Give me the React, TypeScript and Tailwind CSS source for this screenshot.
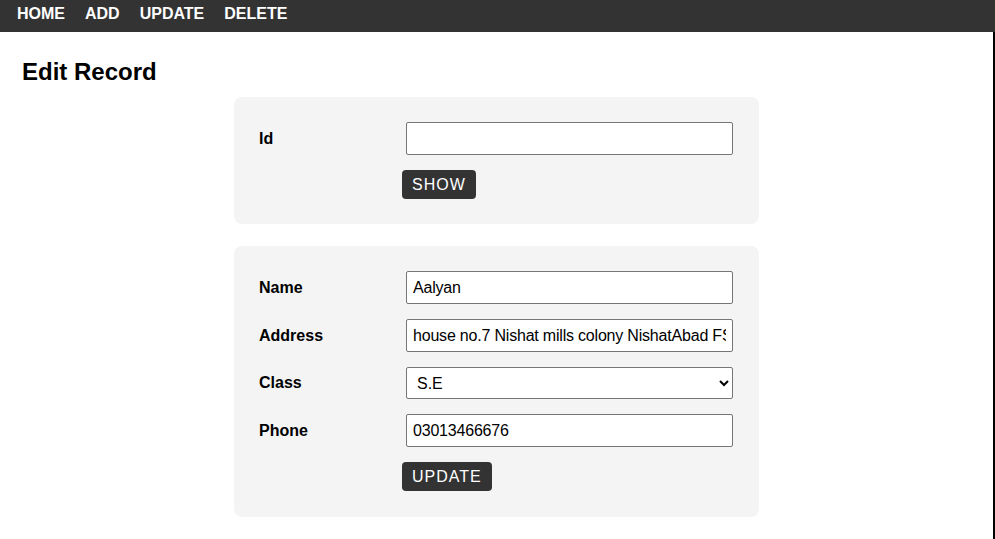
const font = { fontFamily: '"Liberation Sans", Arial, sans-serif' }

const navItems = ["HOME", "ADD", "UPDATE", "DELETE"]

function Row({ label, children }: { label: string; children: React.ReactNode }) {
  return (
    <div className="grid grid-cols-[147px_1fr] items-center">
      <label className="text-[16px] font-bold text-black">{label}</label>
      {children}
    </div>
  )
}

function TextInput({ value }: { value: string }) {
  return (
    <input
      readOnly
      value={value}
      className="h-[33px] w-full rounded-[2px] border border-[#767676] bg-white px-[6px] text-[16px] tracking-[-0.2px] text-black outline-none"
    />
  )
}

function DarkButton({ children }: { children: React.ReactNode }) {
  return (
    <div className="grid grid-cols-[147px_1fr]">
      <div />
      <div>
        <button className="ml-[-4px] h-[29px] rounded-[4px] bg-[#333333] px-[10px] text-[16px] tracking-[1px] text-white">
          {children}
        </button>
      </div>
    </div>
  )
}

export default function App() {
  return (
    <div className="min-h-screen bg-white" style={font}>
      <nav className="flex h-8 gap-[20px] bg-[#333333] pl-[17px] pt-[5px]">
        {navItems.map((item) => (
          <a key={item} className="text-[16px] font-bold leading-[18px] text-white">
            {item}
          </a>
        ))}
      </nav>
      <main className="min-h-[507px] border-r-2 border-black pb-6 pt-[26px]">
        <h1 className="pl-[22px] text-[24px] font-bold leading-[28px] text-black">Edit Record</h1>

        <div className="mx-auto mt-[11px] w-[525px] rounded-[8px] bg-[#f4f4f4] pb-[25px] pl-[25px] pr-[26px] pt-[25px]">
          <div className="flex flex-col gap-[15px]">
            <Row label="Id">
              <TextInput value="" />
            </Row>
            <DarkButton>SHOW</DarkButton>
          </div>
        </div>

        <div className="mx-auto mt-[22px] w-[525px] rounded-[8px] bg-[#f4f4f4] pb-[26px] pl-[25px] pr-[26px] pt-[25px]">
          <div className="flex flex-col gap-[15px]">
            <Row label="Name">
              <TextInput value="Aalyan" />
            </Row>
            <Row label="Address">
              <TextInput value="house no.7 Nishat mills colony NishatAbad FSD" />
            </Row>
            <Row label="Class">
              <select
                defaultValue="S.E"
                className="h-[32px] w-full rounded-[2px] border border-[#767676] bg-white px-[6px] text-[16px] text-black outline-none"
              >
                <option>F.E</option>
                <option>S.E</option>
                <option>T.E</option>
                <option>B.E</option>
              </select>
            </Row>
            <Row label="Phone">
              <TextInput value="03013466676" />
            </Row>
            <DarkButton>UPDATE</DarkButton>
          </div>
        </div>
      </main>
    </div>
  )
}
